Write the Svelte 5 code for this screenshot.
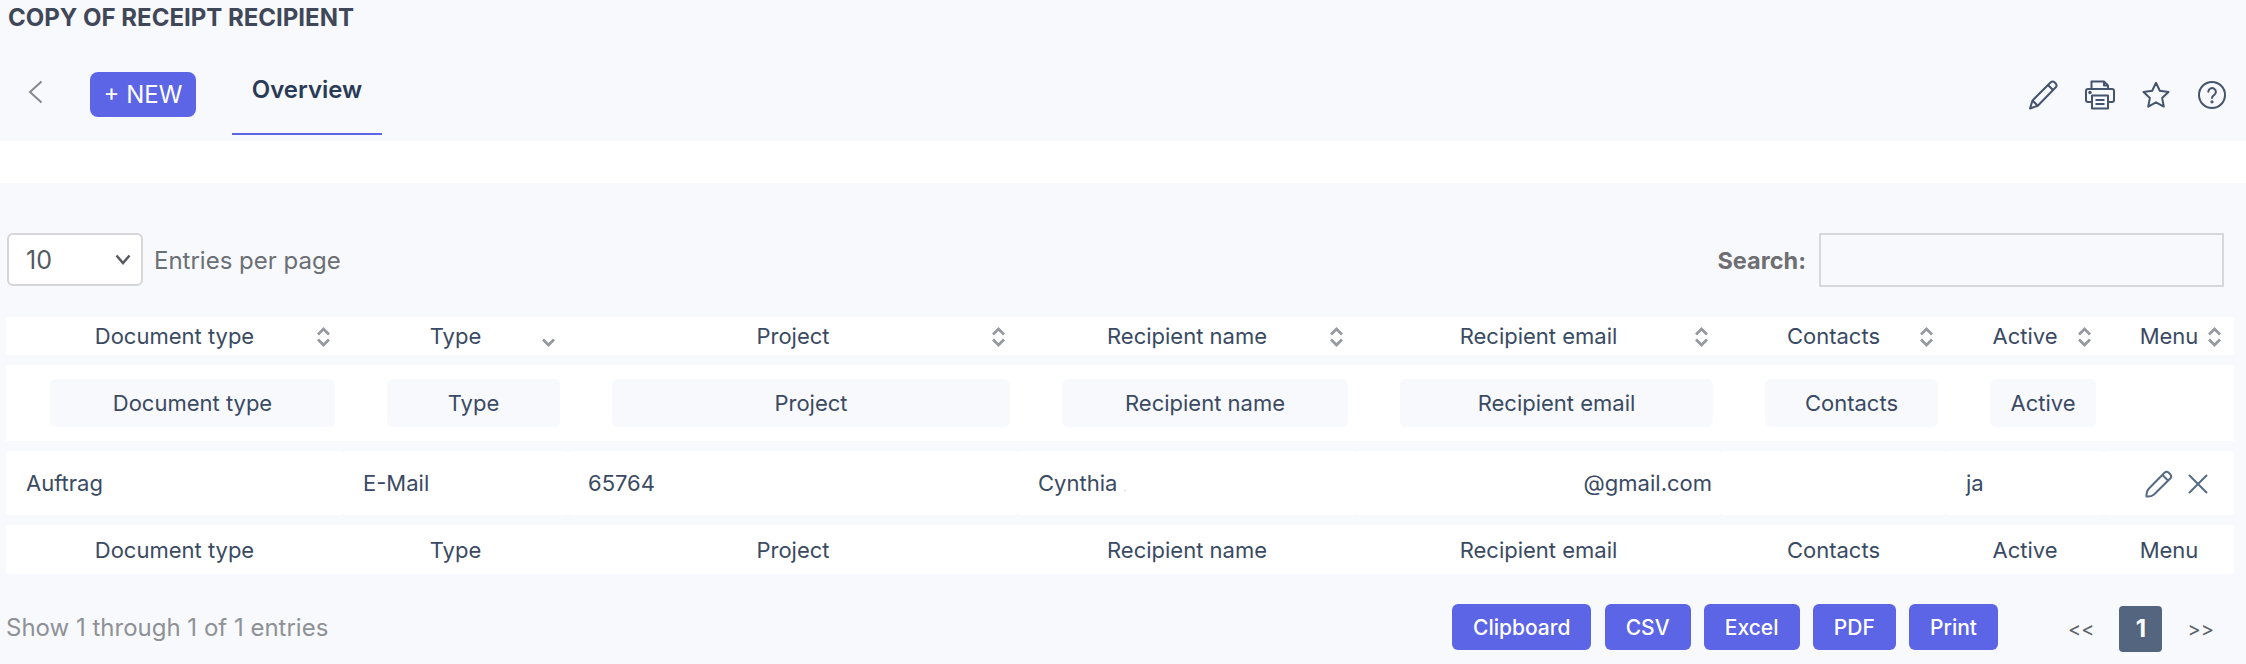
<script lang="ts">
  const COLUMNS = [
    { label: 'Document type', width: 337, sort: 'both', filter: true },
    { label: 'Type', width: 225, sort: 'down', filter: true },
    { label: 'Project', width: 450, sort: 'both', filter: true },
    { label: 'Recipient name', width: 338, sort: 'both', filter: true },
    { label: 'Recipient email', width: 365, sort: 'both', filter: true },
    { label: 'Contacts', width: 225, sort: 'both', filter: true },
    { label: 'Active', width: 158, sort: 'both', filter: true },
    { label: 'Menu', width: 130, sort: 'both', filter: false },
  ];

  const EXPORTS = ['Clipboard', 'CSV', 'Excel', 'PDF', 'Print'];
</script>

<div class="page">
  <h1 class="title">COPY OF RECEIPT RECIPIENT</h1>

  <div class="toolbar">
    <button class="back" aria-label="Back">
      <svg width="15" height="24" viewBox="0 0 15 24" fill="none" stroke="#85888e" stroke-width="2">
        <path d="M13.5 1.5 2 12l11.500 10.500" />
      </svg>
    </button>
    <button class="new">+ NEW</button>
    <div class="tab">Overview</div>

    <div class="tools">
      <svg width="30" height="30" viewBox="0 0 30 30" fill="none" stroke="#44546c" stroke-width="2" stroke-linejoin="round">
        <path d="M2 28.500l2.500-8L22.500 2.500a3 3 0 0 1 4.200 0l.8.800a3 3 0 0 1 0 4.200L9.800 25.800z" />
        <path d="M4.500 20.500l5.300 5.300M20 5l5 5" />
      </svg>
      <svg width="30" height="30" viewBox="0 0 30 30" fill="none" stroke="#44546c" stroke-width="2" stroke-linejoin="round">
        <path d="M6.500 9V1.500h12.500l4 4V9" />
        <path d="M19 1.500v4h4" />
        <path d="M7 22H3a2 2 0 0 1-2-2v-9a2 2 0 0 1 2-2h24a2 2 0 0 1 2 2v9a2 2 0 0 1-2 2h-4" />
        <path d="M7 15.500h16v13H7z" />
        <path d="M10.500 20h9M10.500 24h9" />
        <circle cx="5" cy="12.500" r="0.800" fill="#44546c" />
      </svg>
      <svg width="28" height="28" viewBox="0 0 28 28" fill="none" stroke="#44546c" stroke-width="2" stroke-linejoin="round">
        <path d="M14 1.800l3.800 8 8.700 1.100-6.400 6 1.700 8.700L14 21.300l-7.800 4.300 1.700-8.700-6.400-6 8.700-1.100z" />
      </svg>
      <svg width="30" height="30" viewBox="0 0 30 30" fill="none" stroke="#44546c" stroke-width="2" stroke-linecap="round">
        <circle cx="15" cy="15" r="13" />
        <path d="M11.300 11.800a3.800 3.800 0 1 1 5.700 3.300c-1.300.8-2 1.500-2 3" />
        <circle cx="15" cy="21.800" r="0.600" fill="#44546c" />
      </svg>
    </div>
  </div>

  <div class="band"></div>

  <div class="controls">
    <div class="length">
      <div class="select">
        <span>10</span>
        <svg width="16" height="11" viewBox="0 0 16 11" fill="none" stroke="#55595f" stroke-width="2.500">
          <path d="M1.500 1.500 8 9l6.500-7.500" />
        </svg>
      </div>
      <span class="length-label">Entries per page</span>
    </div>
    <div class="search">
      <span class="search-label">Search:</span>
      <div class="search-input"></div>
    </div>
  </div>

  <table class="grid">
    <colgroup>
      {#each COLUMNS as col}
        <col style="width: {col.width}px" />
      {/each}
    </colgroup>
    <thead>
      <tr class="head">
        {#each COLUMNS as col}
          <th>
            {col.label}
            <svg class="sort" width="15" height="20" viewBox="0 0 15 20" fill="none" stroke="#96999f" stroke-width="2.800">
              {#if col.sort === 'both'}
                <path d="M2 7.500 7.500 2 13 7.500" />
              {/if}
              <path d="M2 12.500 7.500 18 13 12.500" />
            </svg>
          </th>
        {/each}
      </tr>
      <tr class="filters">
        {#each COLUMNS as col}
          <th>
            {#if col.filter}
              <div class="filter">{col.label}</div>
            {/if}
          </th>
        {/each}
      </tr>
    </thead>
    <tbody>
      <tr class="data">
        <td>Auftrag</td>
        <td>E-Mail</td>
        <td>65764</td>
        <td>Cynthia <span class="speck">.</span></td>
        <td class="email">@gmail.com</td>
        <td></td>
        <td>ja</td>
        <td class="actions">
          <svg width="28" height="28" viewBox="0 0 28 28" fill="none" stroke="#566a85" stroke-width="2" stroke-linejoin="round">
            <path d="M1.500 26.500c-.3-3 .3-5.500 2-7.500L19.500 2.800a3 3 0 0 1 4.200 0l1.500 1.500a3 3 0 0 1 0 4.200L9 24.500c-2 1.700-4.500 2.300-7.500 2z" />
            <path d="M17.500 5l5.500 5.500" />
          </svg>
          <svg width="20" height="20" viewBox="0 0 20 20" fill="none" stroke="#566a85" stroke-width="2">
            <path d="M1 1l18 18M19 1 1 19" />
          </svg>
        </td>
      </tr>
    </tbody>
    <tfoot>
      <tr class="foot">
        {#each COLUMNS as col}
          <th>{col.label}</th>
        {/each}
      </tr>
    </tfoot>
  </table>

  <div class="bottom">
    <span class="info">Show 1 through 1 of 1 entries</span>
    <div class="exports">
      {#each EXPORTS as label}
        <button class="export">{label}</button>
      {/each}
    </div>
    <div class="pager">
      <span class="arrow">&lt;&lt;</span>
      <span class="current">1</span>
      <span class="arrow">&gt;&gt;</span>
    </div>
  </div>
</div>

<style>
  :global(body) {
    margin: 0;
    background: #f8f9fc;
  }

  .page {
    height: 664px;
    overflow: hidden;
    background: #f8f9fc;
    font-family: Inter, "Liberation Sans", sans-serif;
    font-size: 22px;
    color: #3a4a63;
  }

  button {
    font-family: inherit;
    border: none;
    padding: 0;
  }

  .title {
    margin: 0;
    padding: 3px 0 0 8px;
    height: 29px;
    font-size: 24px;
    line-height: 30px;
    font-weight: 700;
    color: #3f4758;
  }

  .toolbar {
    height: 109px;
    display: flex;
    position: relative;
    box-sizing: border-box;
    padding-top: 40px;
  }

  .back {
    background: none;
    width: 15px;
    height: 24px;
    margin: 8px 0 0 28px;
    display: flex;
  }

  .new {
    margin-left: 47px;
    width: 106px;
    height: 45px;
    background: #5c65e6;
    color: #fff;
    border-radius: 8px;
    font-size: 24px;
    font-weight: 400;
  }

  .tab {
    margin-left: 36px;
    width: 150px;
    height: 63px;
    box-sizing: border-box;
    border-bottom: 2px solid #5c65e6;
    text-align: center;
    font-size: 24px;
    font-weight: 600;
    line-height: 36px;
    color: #2a3b57;
  }

  .tools {
    position: absolute;
    right: 19px;
    top: 48px;
    display: flex;
    align-items: center;
    gap: 27px;
  }

  .band {
    height: 42px;
    background: #fff;
  }

  .controls {
    height: 134px;
    box-sizing: border-box;
    padding: 50px 22px 0 7px;
    display: flex;
    justify-content: space-between;
    align-items: flex-start;
  }

  .length {
    display: flex;
    align-items: center;
    gap: 11px;
  }

  .select {
    width: 136px;
    height: 53px;
    box-sizing: border-box;
    border: 2px solid #d6d6d8;
    border-radius: 6px;
    background: #fff;
    display: flex;
    align-items: center;
    justify-content: space-between;
    padding: 0 10px 0 17px;
    font-size: 25px;
    color: #55595f;
  }

  .length-label {
    padding-top: 2px;
    font-size: 24px;
    color: #6b6f76;
  }

  .search {
    display: flex;
    align-items: center;
    gap: 13px;
  }

  .search-label {
    font-size: 23.5px;
    font-weight: 700;
    color: #6e6e73;
  }

  .search-input {
    width: 405px;
    height: 54px;
    box-sizing: border-box;
    border: 2px solid #d8d8dc;
  }

  .grid {
    table-layout: fixed;
    width: 2228px;
    margin: -10px 0 0 6px;
    border-collapse: separate;
    border-spacing: 0 10px;
  }

  .grid th {
    font-weight: 400;
    padding: 0;
    background: #fff;
    text-align: center;
    position: relative;
  }

  .head th {
    height: 38px;
  }

  .sort {
    position: absolute;
    right: 12px;
    top: 10px;
  }

  .filters th {
    height: 76px;
    padding: 0 8px 0 44px;
  }

  .filter {
    height: 48px;
    line-height: 48px;
    background: #f8f9fc;
    border-radius: 6px;
  }

  .data td {
    height: 64px;
    padding: 0 0 0 20px;
    background: #fff;
    border-radius: 3px;
    white-space: nowrap;
  }

  .data td.email {
    padding: 0 9px 0 0;
    text-align: right;
  }

  .data td.actions {
    padding: 0;
  }

  .actions {
    vertical-align: middle;
    text-align: right;
  }

  .actions svg {
    vertical-align: middle;
  }

  .actions svg + svg {
    margin: 0 26px 0 9px;
  }

  .speck {
    color: #aab2be;
    font-size: 10px;
  }

  .foot th {
    height: 49px;
  }

  .bottom {
    position: relative;
    display: flex;
    align-items: center;
    height: 46px;
    margin-top: 20px;
    padding-left: 6px;
  }

  .info {
    font-size: 24px;
    color: #8e9196;
  }

  .exports {
    position: absolute;
    left: 1452px;
    top: 0;
    display: flex;
    gap: 13.25px;
  }

  .export {
    height: 46px;
    padding: 0 21px;
    background: #5c65e6;
    color: #fff;
    border-radius: 6px;
    font-size: 21px;
    font-weight: 500;
  }

  .pager {
    position: absolute;
    left: 2068px;
    top: 2px;
    display: flex;
    align-items: center;
    gap: 25px;
  }

  .arrow {
    font-size: 20px;
    color: #5d6168;
  }

  .current {
    width: 43px;
    height: 46px;
    line-height: 46px;
    text-align: center;
    background: #546580;
    color: #fff;
    border-radius: 4px;
    font-weight: 700;
    font-size: 24px;
  }
</style>
